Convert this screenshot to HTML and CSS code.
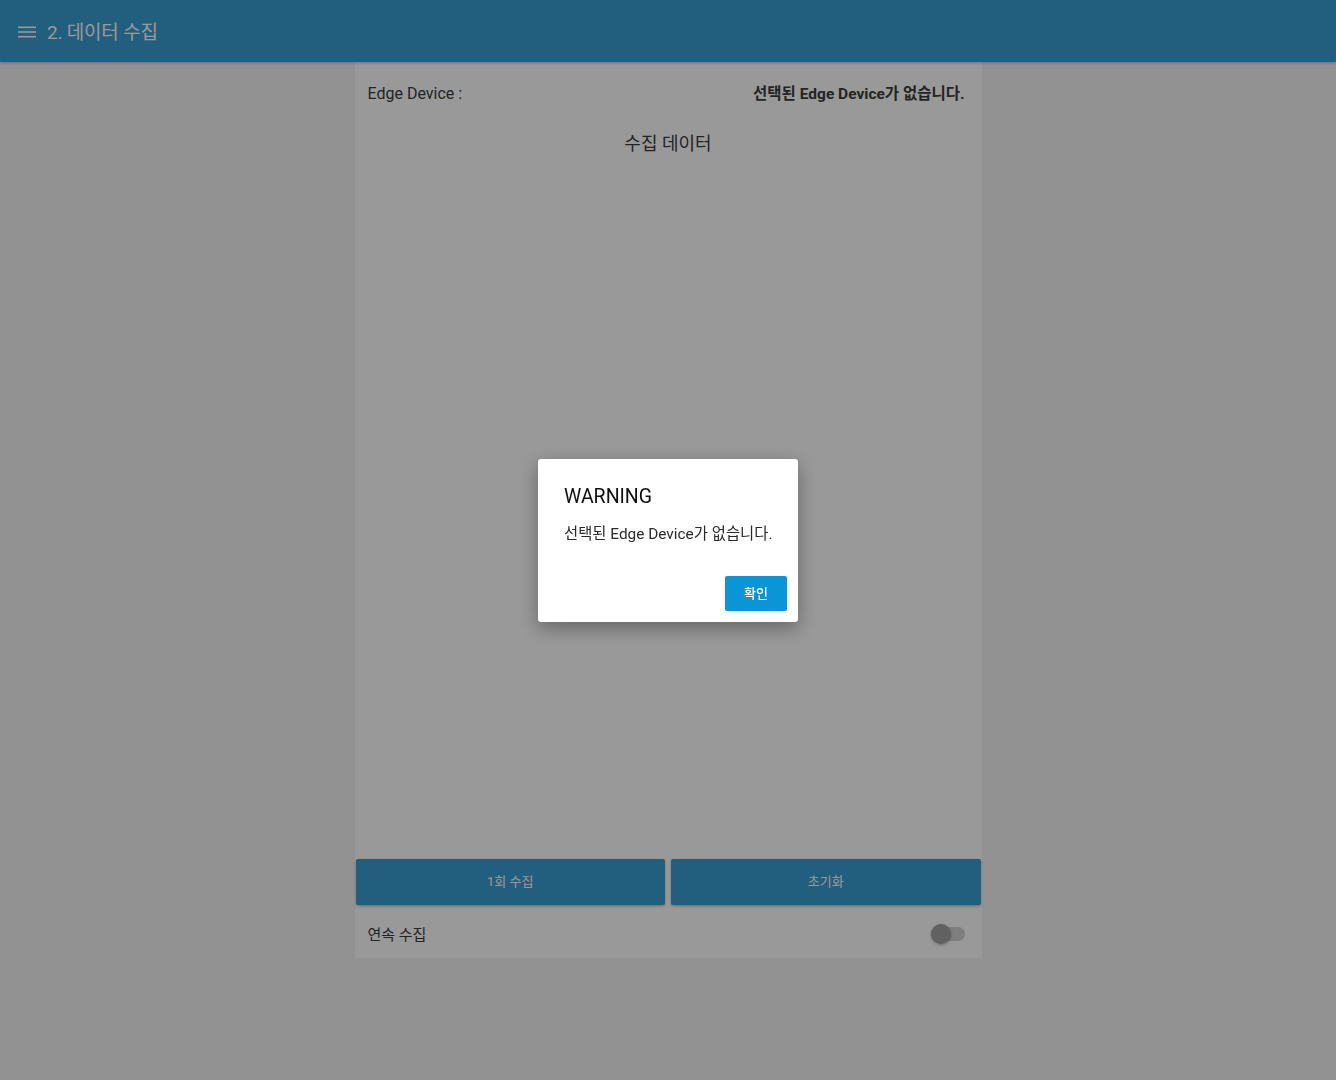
FILE: index.html
```html
<!DOCTYPE html>
<html lang="ko">
<head>
<meta charset="utf-8">
<title>2. 데이터 수집</title>
<link rel="stylesheet" href="styles.css">
</head>
<body>
<header class="topbar">
  <svg class="menu-icon" width="18" height="12" viewBox="0 0 18 12"><rect x="0" y="0.5" width="18" height="1.6" fill="#fff"/><rect x="0" y="5.2" width="18" height="1.6" fill="#fff"/><rect x="0" y="9.9" width="18" height="1.6" fill="#fff"/></svg>
  <span class="title">2. 데이터 수집</span>
</header>
<main class="card">
  <div class="device-row">
    <span class="label">Edge Device :</span>
    <span class="value">선택된 Edge Device가 없습니다.</span>
  </div>
  <div class="section-title">수집 데이터</div>
  <div class="chart"></div>
  <div class="actions">
    <button class="btn-primary">1회 수집</button>
    <button class="btn-primary">초기화</button>
  </div>
  <div class="toggle-row">
    <span class="label">연속 수집</span>
    <span class="switch"><span class="track"></span><span class="thumb"></span></span>
  </div>
</main>
<div class="overlay">
  <div class="dialog">
    <div class="dialog-title">WARNING</div>
    <div class="dialog-msg">선택된 Edge Device가 없습니다.</div>
    <div class="dialog-actions"><button class="btn-ok">확인</button></div>
  </div>
</div>
</body>
</html>
```
FILE: styles.css
```css
html, body {
  margin: 0;
  padding: 0;
}
body {
  background: #f3f3f3;
  font-family: Roboto, "Noto Sans CJK KR", sans-serif;
  color: #3c3c3c;
  height: 1080px;
  overflow: hidden;
}
.topbar {
  height: 62px;
  background: #3a9dd2;
  display: flex;
  align-items: center;
  padding-left: 18px;
  box-shadow: 0 1px 3px rgba(0,0,0,0.25);
  position: relative;
  z-index: 1;
}
.menu-icon {
  display: block;
  margin-right: 11px;
  margin-top: 1px;
}
.title {
  color: #fff;
  font-size: 19px;
  letter-spacing: -0.2px;
  margin-top: -2px;
}
.card {
  width: 627px;
  height: 896px;
  margin: 0 auto;
  background: #fff;
  display: flex;
  flex-direction: column;
}
.device-row {
  display: flex;
  justify-content: space-between;
  align-items: center;
  height: 62px;
  padding: 0 17px 0 13px;
  font-size: 16px;
}
.device-row .value {
  font-weight: 700;
  font-size: 15.5px;
  margin-top: -2px;
}
.section-title {
  text-align: center;
  font-size: 18px;
  line-height: 26px;
  margin-top: 7px;
}
.chart {
  flex: 1;
}
.actions {
  display: flex;
  gap: 6px;
  padding: 0 1px;
}
.btn-primary {
  flex: 1;
  height: 46px;
  border: 0;
  border-radius: 2px;
  background: #3a9dd2;
  color: #fff;
  font-family: inherit;
  font-size: 13px;
  padding: 0 0 3px;
  box-shadow: 0 1px 3px rgba(0,0,0,0.3);
}
.toggle-row {
  display: flex;
  justify-content: space-between;
  align-items: center;
  height: 53px;
  box-sizing: border-box;
  padding: 4px 17px 0 13px;
  font-size: 15px;
}
.switch {
  position: relative;
  width: 34px;
  height: 20px;
  display: block;
}
.switch .track {
  position: absolute;
  left: 0;
  top: 3px;
  width: 34px;
  height: 14px;
  border-radius: 7px;
  background: #d2d2d2;
}
.switch .thumb {
  position: absolute;
  left: 0;
  top: 0;
  width: 20px;
  height: 20px;
  border-radius: 50%;
  background: #a2a2a2;
  box-shadow: 0 1px 3px rgba(0,0,0,0.3);
}
.overlay {
  position: fixed;
  inset: 0;
  background: rgba(0,0,0,0.4);
  display: flex;
  align-items: center;
  justify-content: center;
  z-index: 10;
}
.dialog {
  width: 260px;
  box-sizing: border-box;
  background: #fff;
  border-radius: 3px;
  box-shadow: 0 6px 20px rgba(0,0,0,0.35);
  padding: 26px 11px 11px 26px;
  color: #222;
}
.dialog-title {
  font-size: 19.5px;
  line-height: 24px;
  font-weight: 400;
  color: #111;
}
.dialog-msg {
  font-size: 15.4px;
  line-height: 20px;
  margin-top: 15px;
  color: #2a2a2a;
}
.dialog-actions {
  display: flex;
  justify-content: flex-end;
  margin-top: 32px;
}
.btn-ok {
  width: 62px;
  height: 35px;
  border: 0;
  border-radius: 2px;
  background: #0a96d6;
  color: #fff;
  font-family: inherit;
  font-size: 13px;
  font-weight: 500;
  padding: 0 0 2px;
}
```
